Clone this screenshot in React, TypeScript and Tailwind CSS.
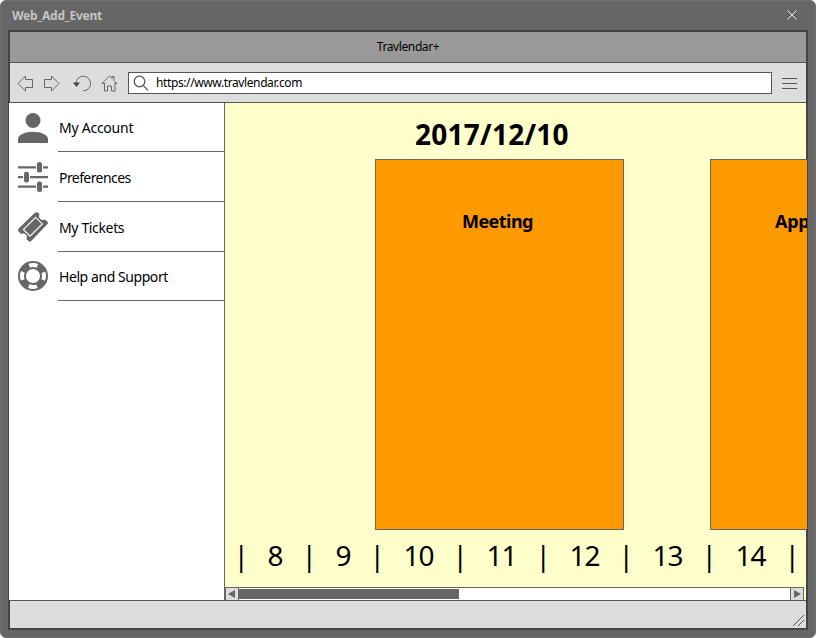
import React from "react";

const hours = [
  { label: "8", cell: "w-[68px]" },
  { label: "9", cell: "w-[68px]" },
  { label: "10", cell: "w-[83px]" },
  { label: "11", cell: "w-[83px]" },
  { label: "12", cell: "w-[83px]" },
  { label: "13", cell: "w-[83px]" },
  { label: "14", cell: "w-[83px]" },
];

function PersonIcon() {
  return (
    <svg width="30" height="30" viewBox="0 0 30 30" fill="#666">
      <circle cx="15" cy="7.5" r="7.5" />
      <path d="M0 30v-4c0-4.5 8-7.3 15-7.3s15 2.8 15 7.3v4z" />
    </svg>
  );
}

function SlidersIcon() {
  return (
    <svg width="30" height="30" viewBox="0 0 30 30" fill="#666">
      <path d="M0 4.2h18v2.2H0zM25 4.2h5v2.2h-5zM0 14h5v2.2H0zM12 14h18v2.2H12zM0 23.6h18v2.2H0zM25 23.6h5v2.2h-5z" />
      <rect x="19" y="0" width="5" height="10.6" rx="2.2" />
      <rect x="6" y="9.8" width="5" height="10.6" rx="2.2" />
      <rect x="19" y="19.4" width="5" height="10.6" rx="2.2" />
    </svg>
  );
}

function TicketIcon() {
  return (
    <svg width="30" height="30" viewBox="0 0 30 30" fill="#666">
      <path d="M.6 16.6 17 .8q1.5-1.2 3 0l1.6 1.5c-1.300 2-.6 3.500.6 4.600s3 1.600 4.800.500l2.300 2.200q1.200 1.300 0 2.600L13.200 29q-1.500 1.300-2.800 0L8.300 27.200c1-2 .7-3.600-.5-4.700s-3-1.500-4.700-.6L.6 19.400q-1.200-1.400 0-2.800z" />
      <path d="M17.700 5.300 24.300 11.900 12 24.100 5.400 17.500z" fill="none" stroke="#fff" strokeWidth="1.1" />
    </svg>
  );
}

function LifebuoyIcon() {
  return (
    <svg width="30" height="30" viewBox="0 0 30 30" fill="none">
      <circle cx="15" cy="15" r="11" stroke="#666" strokeWidth="8" />
      <circle cx="15" cy="15" r="11" stroke="#fff" strokeWidth="4" strokeDasharray="8.4 8.879" strokeDashoffset="4.200" />
    </svg>
  );
}

const menu = [
  { label: "My Account", icon: <PersonIcon />, row: "h-[49px]", iconPad: "pt-[10px]", text: "pt-[15px] tracking-[-0.25px]" },
  { label: "Preferences", icon: <SlidersIcon />, row: "h-[50px]", iconPad: "pt-[10px]", text: "pt-4 tracking-[-0.58px]" },
  { label: "My Tickets", icon: <TicketIcon />, row: "h-[50px]", iconPad: "pt-[10px]", text: "pt-4 tracking-[-0.35px]" },
  { label: "Help and Support", icon: <LifebuoyIcon />, row: "h-[49px]", iconPad: "pt-[9px]", text: "pt-[15px] tracking-[-0.43px]" },
];

function Toolbar() {
  return (
    <div className="flex h-10 items-center border-b border-[#555] bg-[#ddd]">
      <svg className="shrink-0" width="118" height="39" fill="none" stroke="#666" strokeWidth="1">
        <path d="M8 20.500 15.500 13v3.500h7v8h-7V28z" />
        <path d="M49 20.500 41.500 13v3.500h-7v8h7V28z" />
        <path d="M66 20.500a7.300 7.300 0 1 1 7.300 7.300" />
        <path d="M63 19.500h7l-3.500 4.500z" fill="#444" stroke="none" />
        <path d="M92 20.500 99.500 13l2.500 2.500v-2h2v4l3 3M94.500 20v8h3v-5h4v5h3.500v-8" />
        <path d="M92 20.500h2.500M104.500 20.500h2.500" />
      </svg>
      <div className="flex h-[22px] w-[644px] items-center border border-[#555] bg-white">
        <svg className="ml-1 shrink-0" width="18" height="20" fill="none" stroke="#555" strokeWidth="1.200">
          <circle cx="6.500" cy="8.500" r="5.300" />
          <path d="m10.300 12.500 4.700 4.800" />
        </svg>
        <span className="ml-[5px] text-[12px] leading-5 tracking-[-0.39px] text-black">https://www.travlendar.com</span>
      </div>
      <div className="ml-[10px] flex w-[15px] flex-col gap-1 pt-px">
        <div className="h-px bg-[#555]" />
        <div className="h-px bg-[#555]" />
        <div className="h-px bg-[#555]" />
      </div>
    </div>
  );
}

function Sidebar() {
  return (
    <nav className="w-[216px] shrink-0 border-r border-[#666] bg-white">
      {menu.map((item) => (
        <div key={item.label} className={`flex pl-[9px] ${item.row}`}>
          <div className={`w-10 ${item.iconPad}`}>{item.icon}</div>
          <div className="flex-1 border-b border-[#666] pl-px">
            <span className={`block text-[14px] leading-5 whitespace-nowrap text-black ${item.text}`}>{item.label}</span>
          </div>
        </div>
      ))}
    </nav>
  );
}

function Calendar() {
  return (
    <main className="flex min-w-0 flex-1 flex-col overflow-hidden text-black">
      <div className="h-14 border-r border-[#444] bg-[#ffc] pt-[11px] pl-[190px]">
        <h1 className="text-[28px] leading-10 font-bold tracking-[0.25px]">2017/12/10</h1>
      </div>
      <div className="flex h-[371px] bg-[#ffc]">
        <section className="ml-[150px] w-[249px] shrink-0 border border-[#666] bg-[#f90] pt-[49px] pl-[86px]">
          <h2 className="text-[18px] leading-6 font-bold tracking-[-0.55px]">Meeting</h2>
        </section>
        <section className="ml-[86px] w-[249px] shrink-0 border border-[#666] bg-[#f90] pt-[49px] pl-16">
          <h2 className="text-[18px] leading-6 font-bold tracking-[-0.3px]">App</h2>
        </section>
      </div>
      <div className="flex h-[57px] border-r border-[#444] bg-[#ffc] pl-[8.5px] text-[28px] leading-[50px] tracking-[-0.9px]">
        {hours.map((hour) => (
          <div key={hour.label} className={`flex shrink-0 ${hour.cell}`}>
            <span className="w-[14px] text-center">|</span>
            <span className="flex-1 pl-px text-center">{hour.label}</span>
          </div>
        ))}
        <span className="w-[14px] shrink-0 text-center">|</span>
      </div>
      <div className="flex h-[13px] border-r border-[#444] bg-[#ffc]">
        <div className="flex w-[579px] border-t border-r border-[#666] bg-white">
          <div className="w-[14px] border-x border-[#666] bg-[#ddd]">
            <svg width="12" height="12">
              <path d="M9 2v8L2 6z" fill="#666" />
            </svg>
          </div>
          <div className="mt-px h-[10px] w-[220px] bg-[#666]" />
          <div className="flex-1" />
          <div className="w-[13px] border-l border-[#666] bg-[#ddd]">
            <svg width="12" height="12">
              <path d="M3 2v8l7-4z" fill="#666" />
            </svg>
          </div>
        </div>
      </div>
    </main>
  );
}

export default function App() {
  return (
    <div className="h-[638px] w-[816px] bg-white font-['Noto_Sans','Open_Sans',sans-serif]">
      <div className="h-full overflow-hidden rounded-md border border-[#707070] bg-[#666]">
        <header className="flex h-[29px] items-center justify-between pr-[17px] pl-[11px]">
          <span className="text-[12px] font-bold tracking-[-0.25px] text-[#c4c4c4]">Web_Add_Event</span>
          <svg width="11" height="11" stroke="#eee" fill="none">
            <path d="m.5.5 9 9M9.500.5l-9 9" />
          </svg>
        </header>
        <div className="ml-[7px] h-[600px] w-[800px] border-2 border-[#444]">
          <div className="flex h-[31px] justify-center border-b border-[#555] bg-[#999] text-[12px] leading-[30px] tracking-[-0.4px] text-black">
            Travlendar+
          </div>
          <Toolbar />
          <div className="-mx-px flex h-[497px]">
            <Sidebar />
            <Calendar />
          </div>
          <footer className="-ml-px border-t border-[#555]">
            <div className="ml-px flex h-[27px] items-end justify-end bg-[#ddd] pr-px pb-px">
              <svg width="13" height="13" stroke="#555" fill="none">
                <path d="M1 12 12 1M6 12l6-6" />
              </svg>
            </div>
          </footer>
        </div>
      </div>
    </div>
  );
}
